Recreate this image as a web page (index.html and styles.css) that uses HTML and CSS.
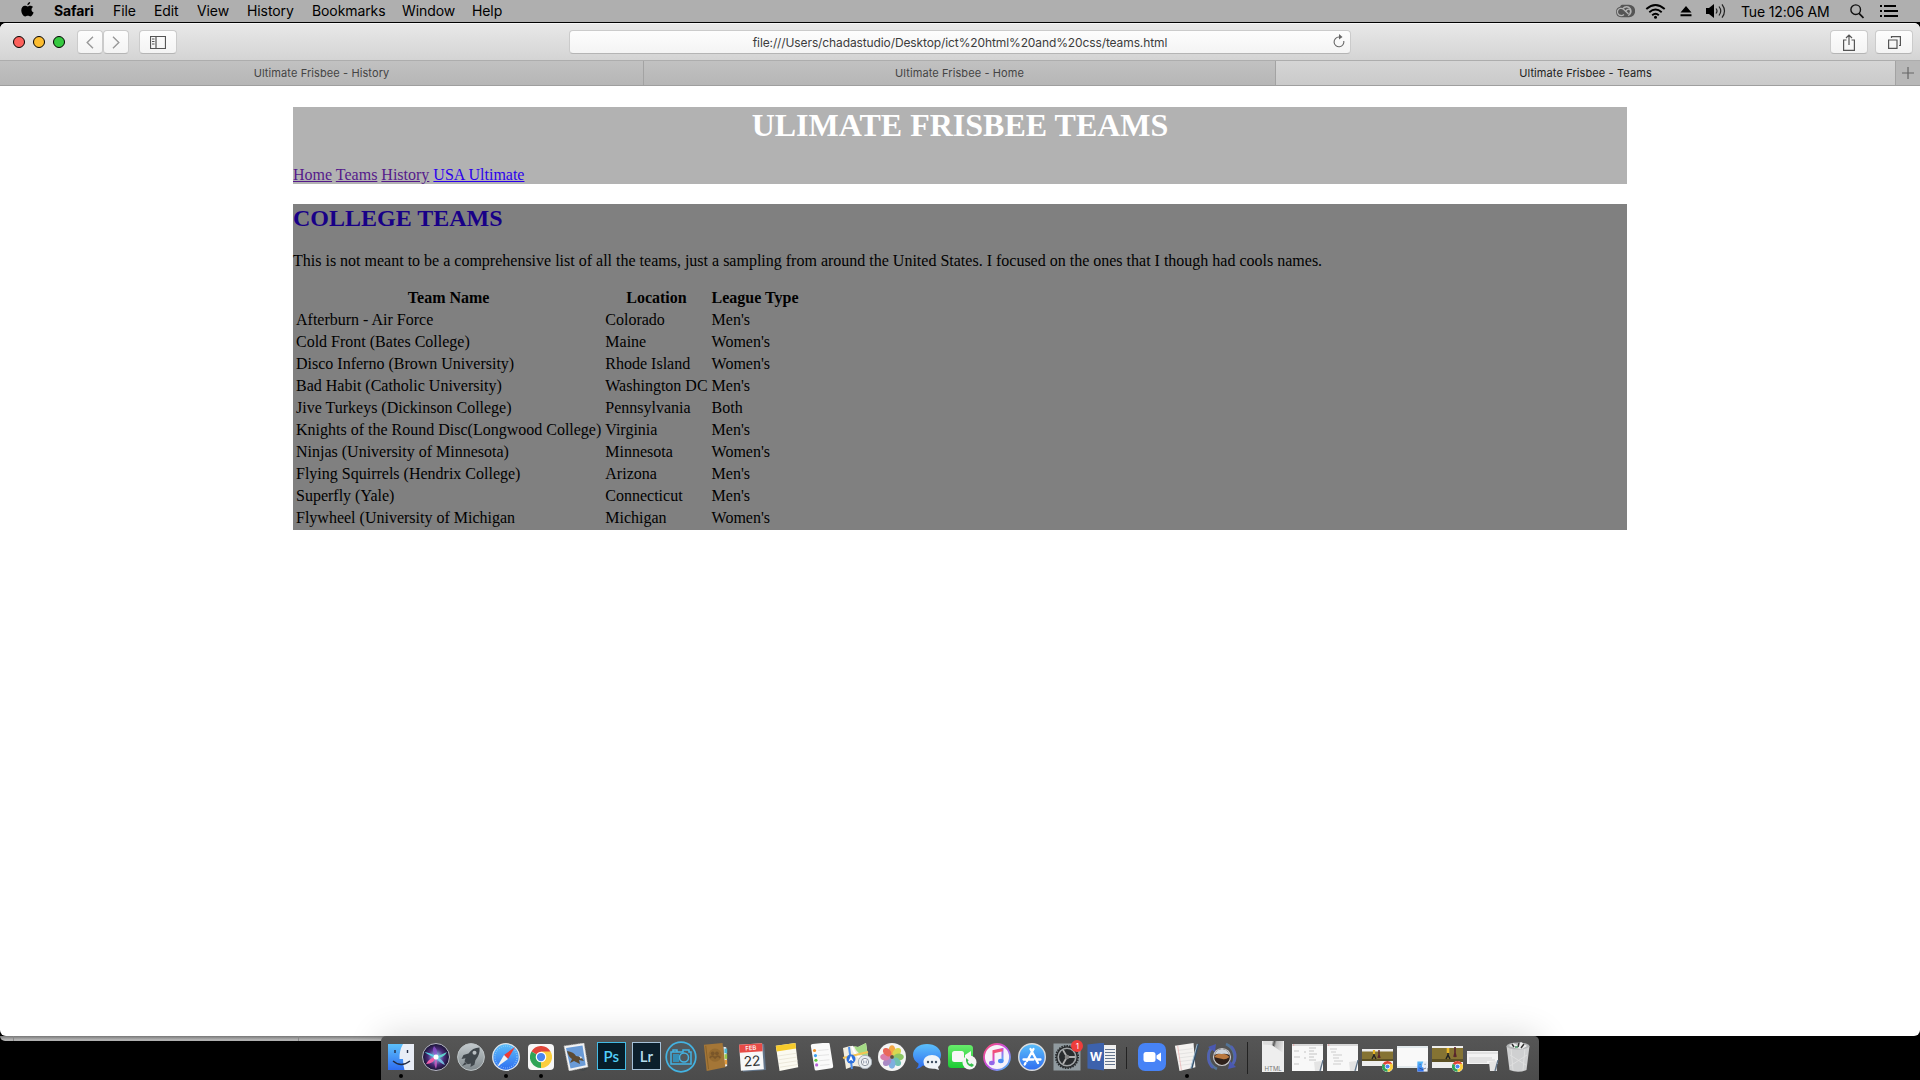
FILE: index.html
```html
<!DOCTYPE html>
<html lang="en">
<head>
<meta charset="utf-8">
<title>Ultimate Frisbee - Teams</title>
<link rel="stylesheet" href="styles.css">
</head>
<body>
<div class="desktop">
  <header class="menubar">
    <svg class="apple" viewBox="0 0 14 17"><path d="M9.900 0c.1 1.500-1.300 3.300-3 3.300C6.700 1.800 8.200.2 9.900 0zM7.100 4.600c.7 0 1.500-.8 2.900-.8 1.200 0 2.300.6 3 1.600-2.500 1.500-2 4.900.6 5.900-.6 1.800-2 4.200-3.500 4.200-1.100 0-1.500-.7-2.800-.7s-1.700.7-2.700.7C2.500 15.500.3 12 .3 8.800.3 5.700 2.200 3.900 4.200 3.900c1.300 0 2.200.7 2.900.7z"/></svg>
    <nav class="menus">
      <b class="m-safari">Safari</b><span class="m-file">File</span><span class="m-edit">Edit</span><span class="m-view">View</span><span class="m-history">History</span><span class="m-bookmarks">Bookmarks</span><span class="m-window">Window</span><span>Help</span>
    </nav>
    <div class="status">
      <svg class="cc" viewBox="0 0 20 14"><path d="M7 .8h7a6.200 6.200 0 0 1 0 12.400H6A5.300 5.300 0 0 1 5 2.800Q6 1 7 .8z" fill="#555"/><g fill="none" stroke="#b4b4b4" stroke-width="1.300"><path d="M9 10.500Q7.500 11.700 6 11.500a3.600 3.600 0 1 1 2.500-6.200l5 4.700"/><path d="M8 4.500a4.500 4.500 0 1 1 5 7"/><path d="M10.500 7.500l1.500-1.700q2-1.500 3.300.3 1 2-.8 3.400"/></g></svg>
      <svg class="wifi" viewBox="0 0 20 15"><g fill="none" stroke="#000" stroke-width="1.900"><path d="M.8 5Q10-3 19.200 5M3.800 8.200q6.200-5.400 12.400 0M6.700 11.200q3.300-3 6.600 0"/></g><circle cx="10" cy="13.300" r="1.500"/></svg>
      <svg class="eject" viewBox="0 0 12 11"><path d="M6 0l5.500 6.500H.5zM.5 8.300h11v2H.5z"/></svg>
      <svg class="volume" viewBox="0 0 21 16"><path d="M0 5h3l5-4v14l-5-4H0z"/><g fill="none" stroke="#222" stroke-width="1.200"><path d="M10 5.500q2 2.500 0 5M13 3.500q3.500 4.500 0 9M16 1.300q5 6.700 0 13.400"/></g></svg>
      <span class="clock">Tue 12:06 AM</span>
      <svg class="search" viewBox="0 0 14 15"><circle cx="5.700" cy="5.700" r="4.800" fill="none" stroke="#111" stroke-width="1.400"/><path d="M9 9.300l4.500 4.700" stroke="#111" stroke-width="1.800"/></svg>
      <svg class="list" viewBox="0 0 18 12"><path d="M0 0h2v2H0zM0 5h2v2H0zM0 10h2v2H0zM4 0h12v2H4zM4 5h14v2H4zM4 10h14v2H4z"/></svg>
    </div>
  </header>

  <section class="window">
    <div class="toolbar">
      <div class="lights"><i class="close"></i><i class="minimize"></i><i class="full"></i></div>
      <div class="pager">
        <button class="btn half"><svg viewBox="0 0 8 13"><path d="M7 .8L1.200 6.500 7 12.200"/></svg></button>
        <button class="btn half"><svg viewBox="0 0 8 13"><path d="M1 .8l5.800 5.700L1 12.200"/></svg></button>
      </div>
      <button class="btn sidebar"><svg viewBox="0 0 16 13"><path d="M.5.5h15v12H.5zM6 .5v12M2 3h2.500M2 5.500h2.500M2 8h2.500"/></svg></button>
      <div class="address"><span>file:///Users/chadastudio/Desktop/ict%20html%20and%20css/teams.html</span>
        <svg viewBox="0 0 12 14"><path d="M10.800 7A4.900 4.900 0 1 1 6 3h1.500" fill="none" stroke="#666" stroke-width="1.100"/><path d="M6 0l3.500 3L6 5.500z" fill="#666"/></svg>
      </div>
      <button class="btn share"><svg viewBox="0 0 12 17"><path d="M3.500 6H.6v10.400h10.800V6H8.500M6 11V1M3 4l3-3 3 3"/></svg></button>
      <button class="btn tabsview"><svg viewBox="0 0 13 13"><path d="M.6 4h8.400v8.400H.6zM3.500 2V.6h8.900v8.900H11"/></svg></button>
    </div>
    <div class="tabs">
      <div class="tab t1">Ultimate Frisbee - History</div>
      <div class="tab t2">Ultimate Frisbee - Home</div>
      <div class="tab t3">Ultimate Frisbee - Teams</div>
      <div class="newtab"><svg viewBox="0 0 12 12"><path d="M6 0v12M0 6h12"/></svg></div>
    </div>
    <main class="page">
      <div class="banner">
        <h1>ULIMATE FRISBEE TEAMS</h1>
        <nav><a class="visited">Home</a> <a class="visited">Teams</a> <a class="visited">History</a> <a>USA Ultimate</a></nav>
      </div>
      <div class="content">
        <h2>COLLEGE TEAMS</h2>
        <p>This is not meant to be a comprehensive list of all the teams, just a sampling from around the United States. I focused on the ones that I though had cools names.</p>
        <table>
          <tr><th>Team Name</th><th>Location</th><th>League Type</th></tr>
          <tr><td>Afterburn - Air Force</td><td>Colorado</td><td>Men's</td></tr>
          <tr><td>Cold Front (Bates College)</td><td>Maine</td><td>Women's</td></tr>
          <tr><td>Disco Inferno (Brown University)</td><td>Rhode Island</td><td>Women's</td></tr>
          <tr><td>Bad Habit (Catholic University)</td><td>Washington DC</td><td>Men's</td></tr>
          <tr><td>Jive Turkeys (Dickinson College)</td><td>Pennsylvania</td><td>Both</td></tr>
          <tr><td>Knights of the Round Disc(Longwood College)</td><td>Virginia</td><td>Men's</td></tr>
          <tr><td>Ninjas (University of Minnesota)</td><td>Minnesota</td><td>Women's</td></tr>
          <tr><td>Flying Squirrels (Hendrix College)</td><td>Arizona</td><td>Men's</td></tr>
          <tr><td>Superfly (Yale)</td><td>Connecticut</td><td>Men's</td></tr>
          <tr><td>Flywheel (University of Michigan</td><td>Michigan</td><td>Women's</td></tr>
        </table>
      </div>
    </main>
  </section>
  <div class="rear-window"><i></i><i></i></div>

  <footer class="dock">
    <svg width="0" height="0" class="defs"><defs>
      <linearGradient id="blue" x2="0" y2="1"><stop stop-color="#5cc0fb"/><stop offset="1" stop-color="#2f6df0"/></linearGradient>
      <linearGradient id="silver" x2="0" y2="1"><stop stop-color="#c3cacd"/><stop offset="1" stop-color="#7f888c"/></linearGradient>
      <linearGradient id="music" x2="1" y2="1"><stop stop-color="#fb4b6d"/><stop offset=".5" stop-color="#c750e8"/><stop offset="1" stop-color="#3cc8f7"/></linearGradient>
      <linearGradient id="green" x2="0" y2="1"><stop stop-color="#67ec6b"/><stop offset="1" stop-color="#1dcb35"/></linearGradient>
      <radialGradient id="siri"><stop stop-color="#fff"/><stop offset=".25" stop-color="#7a9cd0"/><stop offset=".6" stop-color="#4a2a78"/><stop offset="1" stop-color="#14132f"/></radialGradient>
      <symbol id="chrome" viewBox="0 0 24 24"><circle cx="12" cy="12" r="12" fill="#fff"/><path d="M12 12L1.600 6A12 12 0 0 1 22.400 6z" fill="#e0463a"/><path d="M12 12l10.400-6A12 12 0 0 1 12 24z" fill="#fbce3d"/><path d="M12 12v12A12 12 0 0 1 1.600 6z" fill="#2fa457"/><path d="M12 6h10.400l-5.200 9z" fill="#fbce3d"/><circle cx="12" cy="12" r="5.800" fill="#fff"/><circle cx="12" cy="12" r="4.500" fill="#4a86ee"/></symbol>
      <symbol id="finder" viewBox="0 0 28 28"><path d="M1 1h26v26H1z" fill="#e9edf6"/><path d="M1 1h15q-4 7-3.500 15H16q0 6 1.500 11H1z" fill="url(#blue)"/><path d="M8 7v3M20.500 7v3M6 18q8 7 17 0" fill="none" stroke="#222b44" stroke-width="1.400"/></symbol>
      <symbol id="pad" viewBox="0 0 12 12"><path d="M2 2l7-1 1 10H3z" fill="#e4e4e4"/><path d="M11 0L8 11" stroke="#60758b" stroke-width="1.300"/></symbol>
      <symbol id="doc" viewBox="0 0 32 30"><path d="M0 2h31v27H0z" fill="#f8f8f8"/><path d="M0 3h31" stroke="#d8d8d8" stroke-width="2"/><circle cx="1.700" cy="3" r=".7" fill="#e99"/></symbol>
    </defs></svg>

    <div class="slot run"><svg viewBox="0 0 28 28"><use href="#finder"/></svg></div>
    <div class="slot"><svg viewBox="0 0 28 28"><circle cx="14" cy="14" r="13.500" fill="url(#siri)" stroke="#b8b8c4"/><path d="M2.500 9q7 1 11.500 5-5 0-11.500-5z" fill="#57d5e8"/><path d="M14 14L25 9q-3 6-11 6z" fill="#5fe0d2" opacity=".9"/><path d="M14 14q7 2 9 8-6-2-9-8z" fill="#7ed8f2" opacity=".8"/><path d="M14 14q-2 7-10 7 3-6 10-7z" fill="#ef5fa9"/><path d="M14 15q2 5 0 11-3-5 0-11z" fill="#d05fc4" opacity=".8"/><path d="M14 14Q9 8 12 3q5 5 2 11z" fill="#8e55cf" opacity=".8"/><circle cx="14" cy="14" r="2.500" fill="#fff"/></svg></div>
    <div class="slot"><svg viewBox="0 0 28 28"><circle cx="14" cy="14" r="13.400" fill="url(#silver)" stroke="#bcc2c4"/><path d="M22.500 4.500q-7 0-11 6l-5 1.500-2 4 4-.8-1 3 3.200 3 3.300-.7-.6 3.500 4-2.300 1-4.500q5-5.700 4.100-12.700z" fill="#40474c"/><circle cx="17.500" cy="9.800" r="2" fill="#b8bec1"/><path d="M8 19l-3 4 5-2" fill="#40474c"/></svg></div>
    <div class="slot run"><svg viewBox="0 0 28 28"><circle cx="14" cy="14" r="13.300" fill="url(#blue)" stroke="#dce4ea" stroke-width="1.300"/><circle cx="14" cy="14" r="11" fill="none" stroke="#a8dafc" stroke-width="1.300" stroke-dasharray=".5 1.700"/><path d="M23 4L12 12l4 4z" fill="#ee3b35"/><path d="M5 24l7-12 4 4z" fill="#f2f2f2"/></svg></div>
    <div class="slot run"><svg viewBox="0 0 28 28"><rect x="1" y="1" width="26" height="26" rx="4" fill="#f7f7f7"/><use href="#chrome" x="3" y="3" width="22" height="22"/></svg></div>
    <div class="slot"><svg viewBox="0 0 28 28"><circle cx="21" cy="23" r="5" fill="#45484b"/><path d="M2 3l20-3 4 24-19 4z" fill="#f3f3f3" stroke="#bbb" stroke-width=".8" stroke-dasharray="1 .8"/><path d="M4 5l16.500-2.500 3.200 19.700L8.500 25.500z" fill="#6a9bd7"/><path d="M5 8q7 1 9 5l5 1 3 4-5-1 1 4-6-3-4 2 2-4q-4-3-5-8z" fill="#5c4a32"/><path d="M17 13l3 1-1 2z" fill="#eee"/></svg></div>
    <div class="slot"><div class="adobe ps">Ps</div></div>
    <div class="slot"><div class="adobe lr">Lr</div></div>
    <div class="slot"><svg class="big" viewBox="0 0 32 32"><circle cx="16" cy="16" r="14.800" fill="#51595d" stroke="#43b3e2" stroke-width="1.700"/><g fill="none" stroke="#43b3e2" stroke-width="1.500"><path d="M6 11h12v-2h6v2h2v12H6zM8 11V9h4v2"/><circle cx="19" cy="16.500" r="4.500"/></g><path d="M8 13h6v8H8z" fill="#358eb5"/></svg></div>
    <div class="slot"><svg viewBox="0 0 28 30"><path d="M22 4l3 .6 1 20-3 1z" fill="#eee"/><path d="M23 6h3v5h-3z" fill="#4db4cf"/><path d="M23 12h3v5h-3z" fill="#9bc84a"/><path d="M23 18h3v5h-3z" fill="#e39b3d"/><path d="M1 2L21 0l3 26-20 4z" fill="#a47637"/><path d="M3 3l3 25" stroke="#876028"/><circle cx="13" cy="13" r="7" fill="#946a30"/><circle cx="10.500" cy="11" r="2" fill="#7a5629"/><circle cx="15" cy="11" r="2" fill="#7a5629"/><path d="M7.500 16q2.500-4 5.500 0 3-4 5.500 0" fill="none" stroke="#7a5629" stroke-width="1.800"/></svg></div>
    <div class="slot"><div class="calendar"><b>FEB</b><span>22</span></div></div>
    <div class="slot"><svg viewBox="0 0 28 30"><path d="M2 3L23 0l3 26-20 4z" fill="#fbfaf1"/><path d="M2 3L23 0l.7 6L3 9z" fill="#f6cb2c"/><path d="M4 14l20-3M5 18l20-3M5.500 22l20-3M6 26l20-3" stroke="#ded9c7" stroke-width=".6"/></svg></div>
    <div class="slot"><svg viewBox="0 0 28 30"><path d="M2 3q0-2 2-2l16-1.500q2 0 2.300 2L26 25q0 2-2 2L8 29.500q-2 0-2-2z" fill="#fafafa"/><path d="M10 8l11-1M10 13.500l11.500-1M11 19l11-1M12 24l10-1" stroke="#e2e2e2"/><circle cx="6" cy="8" r="1.700" fill="#f2932e"/><circle cx="7" cy="13.500" r="1.700" fill="#3c9ff0"/><circle cx="7.500" cy="18.500" r="1.700" fill="#5fc83f"/><circle cx="8.300" cy="23.500" r="1.700" fill="#b663d9"/></svg></div>
    <div class="slot"><svg class="wide" viewBox="0 0 30 30"><path d="M1 6l7-2 8 1 8-4 3 20-7 4-8-1-8 3z" fill="#f1ede0"/><path d="M12 4l4 1 8-4 2 14q-11-2-14-11z" fill="#a4da85"/><path d="M10 4q3 13 17 14" fill="none" stroke="#fff" stroke-width="2"/><path d="M1 16l25-6" stroke="#f5c453" stroke-width="2"/><path d="M7 5l3 22" stroke="#4e8ee8" stroke-width="2"/><circle cx="9" cy="17" r="4.500" fill="#2d70dd"/><path d="M9 13.500l2.500 6L9 18l-2.500 1.500z" fill="#fff"/><circle cx="23" cy="20" r="6.700" fill="#e8edf1" stroke="#aab1b8"/><circle cx="23" cy="20" r="3.600" fill="#fff" stroke="#6b7480" stroke-width=".8"/><path d="M21.800 18.500v3M24.200 18.500v3" stroke="#60708a" stroke-width=".8"/></svg></div>
    <div class="slot"><svg viewBox="0 0 28 28"><circle cx="14" cy="14" r="14" fill="#f4f4f4"/><g opacity=".85"><ellipse cx="14" cy="7.200" rx="3.400" ry="5" fill="#f69b26"/><ellipse cx="14" cy="7.200" rx="3.400" ry="5" fill="#d4d435" transform="rotate(45 14 14)"/><ellipse cx="14" cy="7.200" rx="3.400" ry="5" fill="#7bc04e" transform="rotate(90 14 14)"/><ellipse cx="14" cy="7.200" rx="3.400" ry="5" fill="#59b8a5" transform="rotate(135 14 14)"/><ellipse cx="14" cy="7.200" rx="3.400" ry="5" fill="#6aa4dd" transform="rotate(180 14 14)"/><ellipse cx="14" cy="7.200" rx="3.400" ry="5" fill="#9c78bd" transform="rotate(225 14 14)"/><ellipse cx="14" cy="7.200" rx="3.400" ry="5" fill="#d6699c" transform="rotate(270 14 14)"/><ellipse cx="14" cy="7.200" rx="3.400" ry="5" fill="#e8503e" transform="rotate(315 14 14)"/></g><circle cx="14" cy="14" r="2" fill="#5e4f38"/></svg></div>
    <div class="slot"><svg viewBox="0 0 28 28"><path d="M14 1c8 0 14 4.500 14 11s-6 11-14 11q-2 0-4-.5-3 3-7 3.500 3-3 2.500-5.500Q0 17 0 12C0 5.500 6 1 14 1z" fill="url(#blue)"/><path d="M19 12c5 0 8.500 3 8.500 7 0 2-1 4-2.500 5l1 3-4-1.300Q10.500 26.500 10.500 19c0-4 3.500-7 8.500-7z" fill="#f0f4f8"/><g fill="#405064"><circle cx="15" cy="19" r="1.200"/><circle cx="19" cy="19" r="1.200"/><circle cx="23" cy="19" r="1.200"/></g></svg></div>
    <div class="slot"><svg class="wide" viewBox="0 0 30 30"><rect x="1" y="3" width="25" height="23" rx="3.500" fill="url(#green)"/><rect x="5" y="9" width="12" height="11" rx="2.500" fill="#f7f7f7"/><path d="M18 13l6-4v10l-6-4z" fill="#f7f7f7"/><circle cx="22.500" cy="20.500" r="7" fill="#f5f5f5"/><path d="M19 16q-1 7 6 9l2-2-2.500-1.800-1.500 1q-2-1-2.300-3l1-1z" fill="#37bf4d"/></svg></div>
    <div class="slot"><svg viewBox="0 0 28 28"><circle cx="14" cy="14" r="13" fill="#f7f3fa" stroke="url(#music)" stroke-width="1.800"/><path d="M10.500 20V8l9-2v12" fill="none" stroke="url(#music)" stroke-width="2"/><path d="M10.500 9l9-2" stroke="#f05379" stroke-width="2.600"/><ellipse cx="8.800" cy="20" rx="2.800" ry="2.200" fill="#9266e8"/><ellipse cx="17.800" cy="18" rx="2.800" ry="2.200" fill="#4d8af2"/></svg></div>
    <div class="slot"><svg viewBox="0 0 28 28"><circle cx="14" cy="14" r="13.300" fill="url(#blue)" stroke="#dcdcdc" stroke-width="1.400"/><path d="M12.500 6l7.500 14M15.500 6L9 18M5.500 16.500h10M19 16.500h3.500M7.500 20l-.8 1.500" stroke="#fff" stroke-width="2.300" stroke-linecap="round"/></svg></div>
    <div class="slot"><svg viewBox="0 0 28 28"><rect x=".5" y=".5" width="27" height="27" fill="#919ba0"/><circle cx="14" cy="14" r="10.800" fill="#292c2e" stroke="#292c2e" stroke-width="2.500" stroke-dasharray="1.500 1"/><circle cx="14" cy="14" r="8.800" fill="none" stroke="#a0a4a6" stroke-width="1.600"/><path d="M14 14h8M14 14l-4-7M14 14l-4 7" stroke="#b0b0b0" stroke-width="1.800"/><circle cx="14" cy="14" r="2.300" fill="#858585"/></svg><em class="badge">1</em></div>
    <div class="slot"><div class="word"><b>W</b><i></i></div></div>
    <div class="sep"></div>
    <div class="slot"><svg viewBox="0 0 28 28"><rect width="28" height="28" rx="7" fill="#4783f6"/><rect x="5.500" y="9" width="12" height="10" rx="2.500" fill="#fff"/><path d="M18.500 12.500L23 9.500v9l-4.500-3z" fill="#fff"/></svg></div>
    <div class="slot run"><svg viewBox="0 0 28 30"><path d="M1 3L21 0l2 26-17 4z" fill="#f4f2f0"/><path d="M4 8l16-2M4 12l16-2M5 16l16-2M5 20l16-2M6 24l16-2" stroke="#d6d6d6" stroke-width=".6"/><path d="M4 3l4 26" stroke="#ebaaaa" stroke-width=".7"/><path d="M26 1l-7 26" stroke="#35516c" stroke-width="2"/><path d="M25 1l-7 26" stroke="#a9c3d5"/></svg></div>
    <div class="slot"><svg class="big" viewBox="0 0 32 32"><circle cx="16" cy="16" r="8.500" fill="#2e211b" stroke="#c9c9cb" stroke-width="1.200"/><path d="M8 16q3-4 7-3 5-1 8.500 3-4 3-7 2-5-1-8.500-2z" fill="#b9783f"/><path d="M8.500 14q2-6 7.500-6t7.500 6q-4-2-8-1-4-1-7 1z" fill="#cdd4dc"/><path d="M11 28A14 14 0 0 1 6 6M20 3a14 14 0 0 1 6 21" fill="none" stroke="#527397" stroke-width="2.800"/><path d="M7 27A14 14 0 0 1 5 8M25 5a14 14 0 0 1 2 18" fill="none" stroke="#5261b5" stroke-width="2.300"/><path d="M2 6l8-3-1 8zM30 26l-8 2 2-8z" fill="#4a58b1"/></svg></div>
    <div class="sep tall"></div>
    <div class="slot"><div class="htmlfile"><i></i><span>HTML</span></div></div>
    <div class="slot"><svg class="thumb" viewBox="0 0 32 30"><use href="#doc"/><path d="M2 9h5M2 15h6M2 22h5M12 10h2M12 16h2M17 6h7M17 9h5M17 12h8M17 15h5M17 18h7" stroke="#c4c4c4"/><use href="#pad" x="20" y="18" width="12" height="12"/></svg></div>
    <div class="slot"><svg class="thumb" viewBox="0 0 32 30"><use href="#doc"/><path d="M3 7h7M4 10h5M6 13h9M6 16h6M7 19h9M6 22h8" stroke="#ccc"/><use href="#pad" x="20" y="18" width="12" height="12"/></svg></div>
    <div class="slot"><svg class="thumb" viewBox="0 0 32 30"><path d="M0 7h31v17H0z" fill="#eee"/><path d="M0 9.500h31V19H0z" fill="#857333"/><path d="M0 18h31" stroke="#5d5124" stroke-width="2"/><path d="M12 8v5l-2 4m2-4l2 4" fill="none" stroke="#222" stroke-width="1.300"/><path d="M12 8v4" stroke="#e8b526" stroke-width="2.200"/><path d="M17 8v5l-1 3m1-3l1 3" fill="none" stroke="#58252c" stroke-width="1.400"/><use href="#chrome" x="20" y="19" width="11" height="11"/></svg></div>
    <div class="slot"><svg class="thumb" viewBox="0 0 32 30"><path d="M0 4h31v22H0z" fill="#f9f9f9"/><path d="M0 5h31M0 25h31" stroke="#ccd9df"/><use href="#finder" x="20" y="19" width="11" height="11"/></svg></div>
    <div class="slot"><svg class="thumb" viewBox="0 0 32 30"><path d="M0 4h31v22H0z" fill="#eee"/><path d="M0 6h31v14H0z" fill="#857333"/><path d="M0 18.500h31" stroke="#5d5124" stroke-width="3"/><path d="M16 6v7l-2 4m2-4l2 4" fill="none" stroke="#222" stroke-width="1.500"/><path d="M16 6v5" stroke="#e8b526" stroke-width="2.600"/><path d="M23 5v6l-1 4m1-4l1 4" fill="none" stroke="#58252c" stroke-width="1.600"/><use href="#chrome" x="20" y="19" width="11" height="11"/></svg></div>
    <div class="slot"><svg class="thumb" viewBox="0 0 32 30"><path d="M0 9h31v13H0z" fill="#f3f3f3"/><path d="M0 11h31M2 16h23M2 18h26M2 20h18" stroke="#d2d2d2"/><use href="#pad" x="20" y="18" width="12" height="12"/></svg></div>
    <div class="slot"><svg class="big" viewBox="0 0 32 32"><path d="M4.500 5h23l-3 24q-8.500 3.500-17 0z" fill="#cfd0d1"/><path d="M9 7l2 22M23 7l-2 22M8 14l16 10M25 14L8 25" stroke="#e6e6e6" opacity=".7"/><ellipse cx="16" cy="5" rx="11.500" ry="3.500" fill="#b3b5b6"/><path d="M7 5l4-3 4 2 4-3 6 4-5 3-7-1z" fill="#eee"/><path d="M10 3l2 3M17 2l-1 4M22 3l-3 4" stroke="#333" stroke-width="1.500"/><path d="M13 6h3" stroke="#3c8d5a" stroke-width="1.500"/></svg></div>
  </footer>
</div>
</body>
</html>
```
FILE: styles.css
```css
* { box-sizing: border-box; }
body { margin: 0; background: #000; font-family: Inter, sans-serif; overflow: hidden; }
svg { display: block; flex: none; }
.desktop { position: relative; width: 1920px; height: 1080px; display: flex; flex-direction: column; background: #000; }

.menubar { height: 22px; flex: none; display: flex; align-items: center; padding: 0 22px 0 21px; background: #afafaf; font-size: 14px; color: #000; }
.apple { width: 13px; height: 16px; margin-top: -2px; }
.menus { display: flex; margin-left: 20px; white-space: nowrap; letter-spacing: -.1px; }
.menus > * { line-height: 22px; }
.m-safari { width: 59px; font-weight: 700; }
.m-file { width: 41px; }
.m-edit { width: 43px; }
.m-view { width: 50px; }
.m-history { width: 65px; }
.m-bookmarks { width: 90px; }
.m-window { width: 70px; }
.status { display: flex; align-items: center; margin-left: auto; }
.cc { width: 20px; height: 14px; margin-right: 10px; }
.wifi { width: 21px; height: 15px; margin-right: 14px; }
.eject { width: 12px; height: 11px; margin-right: 14px; }
.volume { width: 21px; height: 16px; margin-right: 14px; }
.clock { width: 88px; font-size: 14px; letter-spacing: -.15px; white-space: nowrap; margin-right: 21px; }
.search { width: 14px; height: 15px; margin-right: 16px; }
.list { width: 18px; height: 12px; }

.window { height: 1013px; flex: none; margin-top: 1px; display: flex; flex-direction: column; background: #fff; border-radius: 6px; overflow: hidden; }
.toolbar { height: 38px; flex: none; display: flex; align-items: center; padding: 0 7px 0 13px; background: linear-gradient(#e8e8e8, #d4d4d4); border-top: 1px solid #f5f5f5; border-bottom: 1px solid #adadad; }
.lights { display: flex; gap: 8px; }
.lights i { width: 12px; height: 12px; border-radius: 50%; border: 1px solid; }
.close { background: #fc605b; border-color: #ee5450; }
.minimize { background: #fcbc2f; border-color: #eaae2a; }
.full { background: #35c940; border-color: #2fbb38; }
.btn { display: flex; align-items: center; justify-content: center; height: 24px; padding: 0; border: 1px solid #cbcbcb; border-bottom-color: #b5b5b5; border-radius: 4px; background: linear-gradient(#fdfdfd, #f3f3f3); }
.btn path { fill: none; stroke: #555; stroke-width: 1.200; }
.pager { display: flex; margin-left: 12px; }
.half { width: 26px; }
.half svg { width: 8px; height: 13px; }
.half path { stroke: #999; stroke-width: 1.400; }
.sidebar { width: 38px; margin-left: 10px; }
.sidebar svg { width: 16px; height: 13px; }
.address { width: 782px; height: 24px; margin-left: 392px; padding-right: 5px; display: flex; align-items: center; background: linear-gradient(#fdfdfd, #f4f4f4); border: 1px solid #cbcbcb; border-bottom-color: #b5b5b5; border-radius: 4px; font-size: 12px; color: #3c3c3c; }
.address span { flex: 1; text-align: center; padding-left: 17px; white-space: nowrap; letter-spacing: -.11px; }
.address svg { width: 12px; height: 14px; margin-top: -2px; }
.share { width: 38px; margin-left: auto; }
.share svg { width: 12px; height: 17px; }
.tabsview { width: 38px; margin-left: 7px; }
.tabsview svg { width: 13px; height: 13px; }

.tabs { height: 25px; flex: none; display: flex; border-bottom: 1px solid #9f9f9f; background: #b8b8b8; font-size: 11px; color: #444; letter-spacing: .1px; }
.tab { display: flex; align-items: center; justify-content: center; border-right: 1px solid #a3a3a3; background: linear-gradient(#c1c1c1, #b6b6b6); }
.t1 { width: 644px; }
.t2 { width: 632px; }
.t3 { width: 620px; background: linear-gradient(#d5d5d5, #cacaca); color: #222; }
.newtab { flex: 1; display: flex; align-items: center; justify-content: center; }
.newtab svg { width: 12px; height: 12px; }
.newtab path { stroke: #666; stroke-width: 1.200; }

.page { width: 1334px; margin: 21px auto 0; font: 16px/18px "Liberation Serif", "Times New Roman", serif; color: #000; }
.banner { height: 77px; background: #b2b2b2; }
.banner h1 { margin: 0 0 22px; color: #fff; font-size: 32px; line-height: 37px; text-align: center; }
.banner nav { line-height: 18px; }
.banner a { color: #2b00ee; text-decoration: underline; }
.banner .visited { color: #551a8b; }
.content { height: 326px; margin-top: 20px; background: #808080; }
.content h2 { margin: 0 0 20px; font-size: 24px; line-height: 28px; color: #180087; }
.content p { margin: 0 0 16px; }
table { border-spacing: 2px; }
td, th { padding: 1px; }

.rear-window { width: 390px; height: 5px; flex: none; display: flex; justify-content: space-between; padding: 0 91px 0 13px; background: linear-gradient(#777, #b0b0b0 70%); border-radius: 0 0 0 6px; }
.rear-window i { width: 1px; background: #888; }

.dock { position: absolute; left: 381px; top: 1036px; width: 1158px; height: 44px; padding: 0 2.500px; display: flex; background: linear-gradient(#565656, #4b4b4b); border-radius: 5px 5px 0 0; box-shadow: 0 0 34px rgba(0,0,0,.16); }
.defs { position: absolute; }
.slot { position: relative; width: 35.050px; height: 41px; flex: none; display: flex; align-items: center; justify-content: center; }
.slot > svg { width: 28px; height: 28px; }
.slot > .wide { width: 30px; height: 30px; }
.slot > .big { width: 32px; height: 32px; }
.slot > .thumb { width: 32px; height: 30px; }
.run::after { content: ""; position: absolute; left: 15.500px; top: 38px; width: 4px; height: 4px; border-radius: 50%; background: #000; }
.sep { width: 15px; display: flex; justify-content: center; padding: 11px 0; }
.sep::before { content: ""; width: 1px; background: #222; }
.tall { width: 16px; padding: 6px 0; }
.adobe { width: 29px; height: 28px; display: flex; align-items: center; justify-content: center; margin-top: -2px; font: 600 15px Lato, sans-serif; }
.ps { color: #53cffa; background: #071d29; border: 1.500px solid #43bbe5; }
.lr { color: #b5dced; background: #0c1f2c; border: 1.500px solid #a6c1d8; }
.calendar { width: 23px; height: 26px; background: #f8f8f8; transform: rotate(-4deg); display: flex; flex-direction: column; align-items: center; box-shadow: 2px 1px #62758a; }
.calendar b { width: 100%; height: 8px; background: #e74b46; color: #fff; font-size: 6px; font-weight: 500; line-height: 8px; text-align: center; }
.calendar span { font-size: 14px; line-height: 18px; color: #333; letter-spacing: -.4px; }
.badge { position: absolute; right: 1px; top: 4px; width: 12px; height: 12px; border-radius: 50%; background: #ee3d3b; color: #fff; font: 8px/12px Inter, sans-serif; text-align: center; }
.word { width: 29px; height: 27px; display: flex; align-items: center; }
.word b { width: 17px; height: 28px; background: #3d62ac; color: #fff; font-size: 12px; line-height: 28px; text-align: center; clip-path: polygon(0 7%, 100% 0, 100% 100%, 0 93%); }
.word i { width: 12px; height: 24px; border: 1px solid #eee; border-width: 2px 1px 2px 1px; background: repeating-linear-gradient(#f1f1f1 0 2px, #65758d 2px 3px); }
.htmlfile { width: 22px; height: 31px; background: #eee; display: flex; flex-direction: column; justify-content: space-between; align-items: center; }
.htmlfile i { width: 20px; height: 12px; background: linear-gradient(105deg, #ddd 40%, #555 50%, #bbb 60%, #eee); clip-path: polygon(0 0, 100% 0, 100% 100%, 45% 35%, 0 30%); }
.htmlfile span { font-size: 6px; line-height: 7px; color: #777; }
```
